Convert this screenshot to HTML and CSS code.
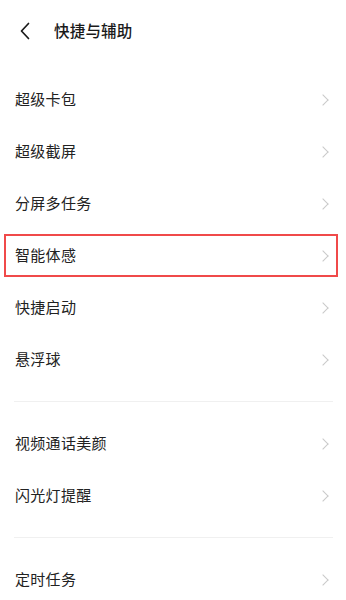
FILE: index.html
```html
<!DOCTYPE html>
<html lang="zh-CN">
<head>
    <meta charset="UTF-8">
    <meta name="viewport" content="width=device-width, initial-scale=1.0">
    <title>快捷与辅助</title>
    <link rel="stylesheet" href="styles.css">
</head>
<body>
<div class="page">
    <div class="header">
        <svg class="back" width="12" height="18" viewBox="0 0 12 18">
            <path d="M9.5 1.5 L2.5 9 L9.5 16.5" fill="none" stroke="#1a1a1a" stroke-width="1.7" stroke-linecap="round" stroke-linejoin="round"/>
        </svg>
        <h1 class="title">快捷与辅助</h1>
    </div>

    <div class="group">
        <div class="row"><span>超级卡包</span><i class="arrow"></i></div>
        <div class="row"><span>超级截屏</span><i class="arrow"></i></div>
        <div class="row"><span>分屏多任务</span><i class="arrow"></i></div>
        <div class="row marked"><span>智能体感</span><i class="arrow"></i></div>
        <div class="row"><span>快捷启动</span><i class="arrow"></i></div>
        <div class="row"><span>悬浮球</span><i class="arrow"></i></div>
    </div>
    <hr class="separator">
    <div class="group">
        <div class="row"><span>视频通话美颜</span><i class="arrow"></i></div>
        <div class="row"><span>闪光灯提醒</span><i class="arrow"></i></div>
    </div>
    <hr class="separator">
    <div class="group">
        <div class="row"><span>定时任务</span><i class="arrow"></i></div>
    </div>
</div>
</body>
</html>
```

FILE: styles.css
```css
body {
    margin: 0;
    background-color: #fff;
    font-family: "Noto Sans CJK SC", "Noto Sans", sans-serif;
    color: #222;
    overflow: hidden;
}
.page {
    width: 346px;
}
.header {
    display: flex;
    align-items: center;
    height: 62px;
    padding-left: 19px;
    margin-bottom: 12px;
}
.back {
    display: block;
}
.title {
    margin: 0 0 2px 23px;
    font-size: 15.5px;
    font-weight: 500;
    color: #1a1a1a;
    letter-spacing: 0.2px;
}
.row {
    position: relative;
    display: flex;
    align-items: center;
    justify-content: space-between;
    height: 52px;
    padding: 0 17px 0 15px;
    font-size: 15px;
}
.row span {
    letter-spacing: 0.3px;
    margin-bottom: 3px;
}
.arrow {
    width: 7px;
    height: 7px;
    border-top: 1.3px solid #c9c9c9;
    border-right: 1.3px solid #c9c9c9;
    transform: rotate(45deg);
    margin-right: 2px;
}
.marked::after {
    content: "";
    position: absolute;
    top: 4px;
    left: 4px;
    right: 8px;
    height: 39px;
    border: 2px solid #f04a4a;
}
.separator {
    border: 0;
    height: 1px;
    background: #f0f0f0;
    margin: 15px 13px 16px 14px;
}
```
